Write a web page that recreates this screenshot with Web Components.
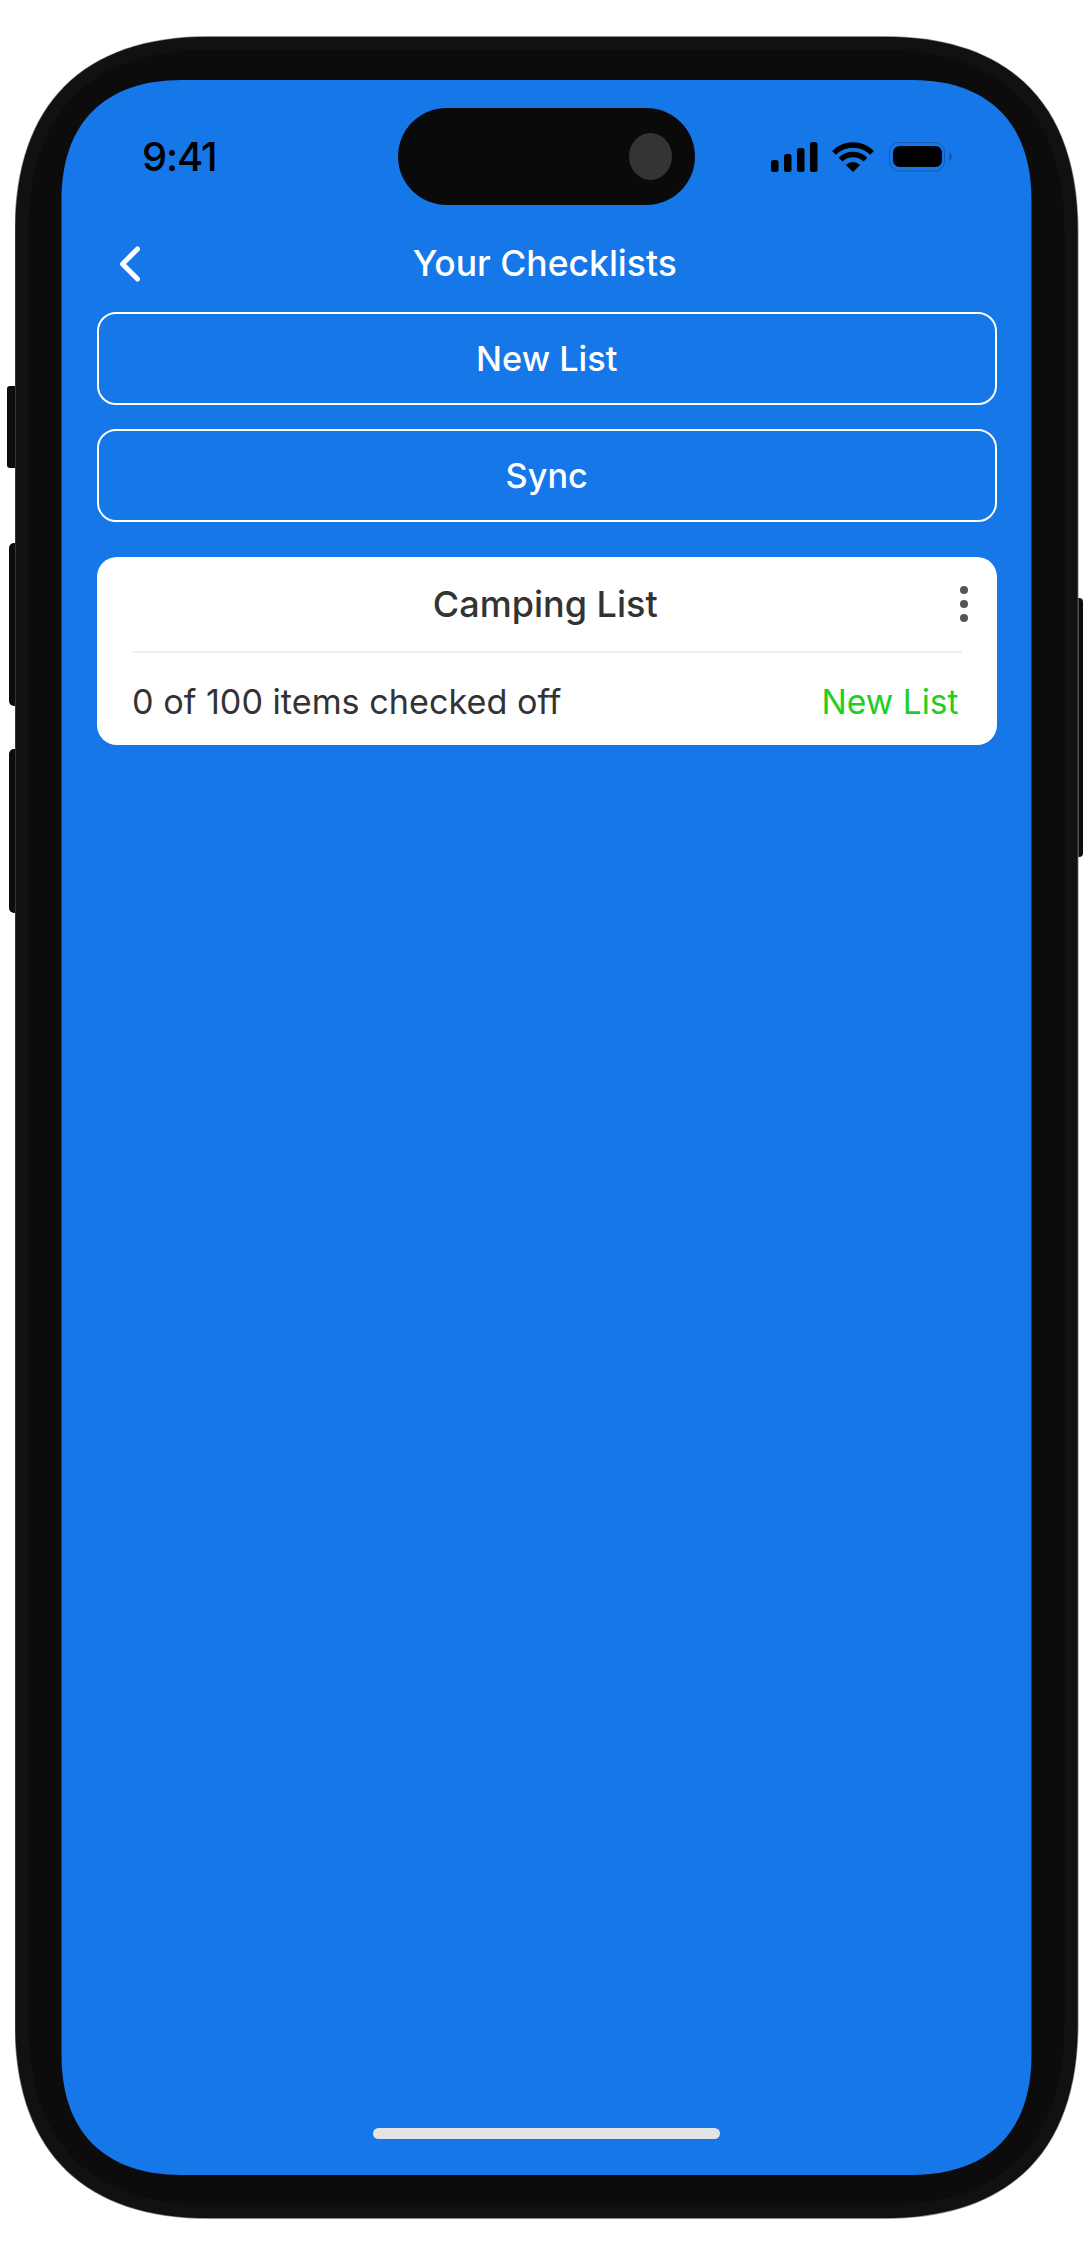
<!DOCTYPE html>
<html lang="en">
<head>
<meta charset="utf-8">
<title>Your Checklists</title>
<style>
  html, body { margin: 0; background: #fff; }
  body { padding: 36px 0 0 14.5px; width: 1090px; height: 2256px; box-sizing: border-box; overflow: hidden; font-family: Inter, "Liberation Sans", sans-serif; }
</style>
</head>
<body>
<phone-frame>
  <status-bar time="9:41"></status-bar>
  <nav-header>Your Checklists</nav-header>
  <page-actions>
    <outline-button>New List</outline-button>
    <outline-button>Sync</outline-button>
  </page-actions>
  <list-card title="Camping List" progress="0 of 100 items checked off" action="New List"></list-card>
  <home-indicator></home-indicator>
</phone-frame>

<script>
function shadow(el, html) {
  el.attachShadow({ mode: 'open' }).innerHTML = html;
}

function squircle(w, h, e, c) {
  return `path('M0 ${e}C0 ${c} ${c} 0 ${e} 0L${w - e} 0C${w - c} 0 ${w} ${c} ${w} ${e}L${w} ${h - e}C${w} ${h - c} ${w - c} ${h} ${w - e} ${h}L${e} ${h}C${c} ${h} 0 ${h - c} 0 ${h - e}Z')`;
}

class PhoneFrame extends HTMLElement {
  connectedCallback() {
    if (this.shadowRoot) return;
    shadow(this, `<style>
      :host { display: block; position: relative; width: 1064px; height: 2183px; }
      .edge { position: relative; height: 100%; box-sizing: border-box; padding: 0.8px; background: #8a8a8a; clip-path: ${squircle(1064, 2183, 195, 68)}; }
      .body { height: 100%; box-sizing: border-box; padding: 13.2px; background: #101113; clip-path: ${squircle(1062.4, 2181.4, 194, 67.5)}; }
      .bezel { height: 100%; box-sizing: border-box; padding: 30px 33px; background: #0c0c0c; clip-path: ${squircle(1036, 2155, 181, 62)}; }
      .screen { height: 100%; box-sizing: border-box; display: flex; flex-direction: column;
        background: #1677e8; padding: 0 35px 0 35.5px; position: relative; clip-path: ${squircle(970, 2095, 120, 43)}; }
      .island { position: absolute; top: 28px; left: 336.5px; width: 297px; height: 97px; border-radius: 49px; background: #0a0a0a; }
      .lens { position: absolute; top: 25px; right: 23px; width: 43px; height: 47px; border-radius: 50%; background: #333436; }
      .side { position: absolute; background: #0c0c0c; }
      .mute { left: -7.2px; top: 350px; width: 12px; height: 82px; border-radius: 3px 0 0 3px; }
      .up { left: -5.2px; top: 507px; width: 12px; height: 163px; border-radius: 5px 0 0 5px; }
      .down { left: -5.2px; top: 713px; width: 12px; height: 164px; border-radius: 5px 0 0 5px; }
      .power { right: -4.5px; top: 562px; width: 12px; height: 259px; border-radius: 0 4px 4px 0; }
    </style>
    <span class="side mute"></span><span class="side up"></span><span class="side down"></span><span class="side power"></span>
    <div class="edge"><div class="body"><div class="bezel"><div class="screen"><div class="island"><div class="lens"></div></div><slot></slot></div></div></div></div>`);
  }
}

class StatusBar extends HTMLElement {
  connectedCallback() {
    if (this.shadowRoot) return;
    shadow(this, `<style>
      :host { display: flex; align-items: center; justify-content: space-between; height: 154px; margin: 0 44.5px 0 45px; color: #000; }
      .time { font: 500 40px/1 Inter, "Liberation Sans", sans-serif; letter-spacing: -1.2px; }
      .icons { display: flex; align-items: center; }
      svg { display: block; }
    </style>
    <span class="time">${this.getAttribute('time')}</span>
    <div class="icons">
      <svg width="181" height="30" viewBox="0 0 181 30" aria-hidden="true">
        <rect x="0" y="18" width="7.5" height="12" rx="2.5"/>
        <rect x="13" y="12" width="7.5" height="18" rx="2.5"/>
        <rect x="26" y="6" width="7.5" height="24" rx="2.5"/>
        <rect x="39" y="0" width="7.5" height="30" rx="2.5"/>
        <g transform="translate(61 0)">
          <path d="M1.9 10.9A27 27 0 0 1 40.1 10.9M8.6 17.6A17.5 17.5 0 0 1 33.4 17.6" fill="none" stroke="#000" stroke-width="5.4"/>
          <path d="M21 30L13.9 22.9A10 10 0 0 1 28.1 22.9Z"/>
        </g>
        <rect x="118.5" y="0.5" width="55" height="28.5" rx="9.5" fill="none" stroke="#0f5db5" stroke-width="1"/>
        <rect x="122" y="4" width="49" height="21" rx="6.5"/>
        <path d="M178 10.5C180 11 181 12.5 181 14.7S180 18.5 178 19Z" fill="#0f5db5"/>
      </svg>
    </div>`);
  }
}

class NavHeader extends HTMLElement {
  connectedCallback() {
    if (this.shadowRoot) return;
    shadow(this, `<style>
      :host { display: grid; grid-template-columns: 1fr auto 1fr; align-items: center; height: 60px; margin-bottom: 18px; padding-right: 4px; color: #fff; }
      .title { font: 550 35.5px/1 Inter, "Liberation Sans", sans-serif; }
      svg { display: block; margin-left: 22.5px; }
    </style>
    <svg width="22" height="36" viewBox="0 0 22 36" aria-hidden="true"><path d="M18.5 3L3.5 18L18.5 33" fill="none" stroke="#fff" stroke-width="5" stroke-linecap="round" stroke-linejoin="round"/></svg>
    <span class="title"><slot></slot></span>`);
  }
}

class PageActions extends HTMLElement {
  connectedCallback() {
    if (this.shadowRoot) return;
    shadow(this, `<style>:host { display: flex; flex-direction: column; gap: 24px; margin-bottom: 35px; }</style><slot></slot>`);
  }
}

class OutlineButton extends HTMLElement {
  connectedCallback() {
    if (this.shadowRoot) return;
    shadow(this, `<style>
      :host { display: flex; align-items: center; justify-content: center; box-sizing: border-box; height: 93px; padding-top: 2px;
        border: 2px solid #fff; border-radius: 19px; color: #fff; font: 550 34.3px/1 Inter, "Liberation Sans", sans-serif; }
    </style><slot></slot>`);
  }
}

class ListCard extends HTMLElement {
  connectedCallback() {
    if (this.shadowRoot) return;
    shadow(this, `<style>
      :host { display: block; height: 188px; box-sizing: border-box; padding: 0 35px; background: #fff; border-radius: 20px; color: #333; }
      .head { position: relative; height: 94px; border-bottom: 2px solid #eee; display: flex; align-items: center; justify-content: center; padding-right: 3px; box-sizing: content-box; }
      .title { font: 550 36px/1 Inter, "Liberation Sans", sans-serif; }
      .dots { position: absolute; right: -7px; top: 28px; display: block; }
      .foot { display: flex; align-items: center; justify-content: space-between; height: 92px; padding: 6px 3px 0 0; box-sizing: border-box; font: 400 34.2px/1 Inter, "Liberation Sans", sans-serif; }
      .action { color: #1ecf1e; font-size: 33.6px; }
    </style>
    <div class="head">
      <span class="title">${this.getAttribute('title')}</span>
      <svg class="dots" width="10" height="38" viewBox="0 0 10 38" fill="#555" aria-hidden="true"><circle cx="5" cy="5" r="4"/><circle cx="5" cy="19" r="4"/><circle cx="5" cy="33" r="4"/></svg>
    </div>
    <div class="foot"><span>${this.getAttribute('progress')}</span><span class="action">${this.getAttribute('action')}</span></div>`);
  }
}

class HomeIndicator extends HTMLElement {
  connectedCallback() {
    if (this.shadowRoot) return;
    shadow(this, `<style>
      :host { display: block; width: 347px; height: 11px; margin: auto auto 36px; border-radius: 6px; background: #e3e3e3; }
    </style>`);
  }
}

customElements.define('phone-frame', PhoneFrame);
customElements.define('status-bar', StatusBar);
customElements.define('nav-header', NavHeader);
customElements.define('page-actions', PageActions);
customElements.define('outline-button', OutlineButton);
customElements.define('list-card', ListCard);
customElements.define('home-indicator', HomeIndicator);
</script>
</body>
</html>
